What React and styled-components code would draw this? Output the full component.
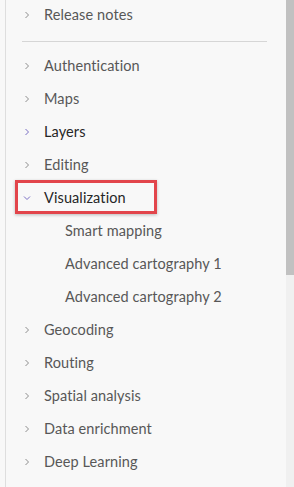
import React from 'react';
import styled, { createGlobalStyle } from 'styled-components';

const GlobalStyle = createGlobalStyle`
  html, body {
    margin: 0;
    padding: 0;
    background: #f8f8f8;
    font-family: Lato, "Open Sans", sans-serif;
  }
`;

const Frame = styled.div`
  display: flex;
  height: 487px;
  width: 294px;
  overflow: hidden;
  background: #f8f8f8;
`;

const Panel = styled.nav`
  flex: 1;
  margin-left: 5px;
  margin-top: -2px;
  border-left: 1px solid #dedede;
`;

const Scrollbar = styled.div`
  width: 8px;
  display: flex;
  flex-direction: column;
  background: #f0f0f0;
`;

const Thumb = styled.div`
  height: 275px;
  background: #c1c1c1;
`;

const Divider = styled.hr`
  border: 0;
  border-top: 1px solid #d6d6d6;
  margin: 10px 19px 7px 16px;
`;

const Row = styled.div`
  position: relative;
  display: flex;
  align-items: center;
  height: 33px;
  padding-left: ${({ $sub }) => ($sub ? '59px' : '10px')};
  font-size: 14.5px;
  color: ${({ $active }) => ($active ? '#262626' : '#575757')};
  letter-spacing: 0.1px;
`;

const Chevron = styled.span`
  display: inline-flex;
  width: 22px;
  justify-content: center;
  margin-right: 6px;
  color: ${({ $accent }) => ($accent ? '#7a6fc4' : '#8e8e8e')};
`;

const Highlight = styled.span`
  position: absolute;
  left: 9px;
  top: -1px;
  width: 136px;
  height: 28px;
  border: 3px solid #e2454b;
  box-shadow: 0 1px 3px rgba(0, 0, 0, 0.25);
  pointer-events: none;
`;

const Right = () => (
  <svg width="6" height="8" viewBox="0 0 6 8">
    <path d="M1.5 1 L4.5 4 L1.5 7" fill="none" stroke="currentColor" strokeWidth="1" />
  </svg>
);

const Down = () => (
  <svg width="8" height="6" viewBox="0 0 8 6">
    <path d="M1 1.5 L4 4.5 L7 1.5" fill="none" stroke="currentColor" strokeWidth="1" />
  </svg>
);

function Item({ label, accent, active, open }) {
  return (
    <Row $active={active}>
      <Chevron $accent={accent || open}>{open ? <Down /> : <Right />}</Chevron>
      {label}
      {open && <Highlight />}
    </Row>
  );
}

export default function App() {
  return (
    <Frame>
      <GlobalStyle />
      <Panel>
        <Item label="Release notes" />
        <Divider />
        <Item label="Authentication" />
        <Item label="Maps" />
        <Item label="Layers" accent active />
        <Item label="Editing" />
        <Item label="Visualization" open active />
        <Row $sub>Smart mapping</Row>
        <Row $sub>Advanced cartography 1</Row>
        <Row $sub>Advanced cartography 2</Row>
        <Item label="Geocoding" />
        <Item label="Routing" />
        <Item label="Spatial analysis" />
        <Item label="Data enrichment" />
        <Item label="Deep Learning" />
      </Panel>
      <Scrollbar>
        <Thumb />
      </Scrollbar>
    </Frame>
  );
}
